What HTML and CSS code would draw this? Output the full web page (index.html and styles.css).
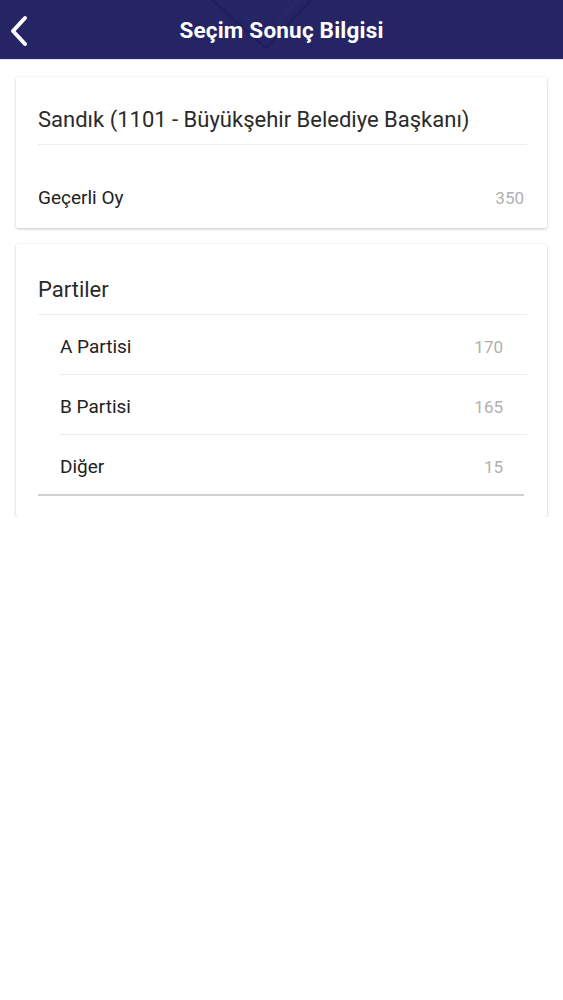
FILE: index.html
```html
<!DOCTYPE html>
<html lang="tr">
<head>
<meta charset="utf-8">
<title>Seçim Sonuç Bilgisi</title>
<link rel="stylesheet" href="styles.css">
</head>
<body>
<header class="topbar">
  <svg class="deco" width="563" height="59" viewBox="0 0 563 59" aria-hidden="true">
    <polyline points="212,0 266,48 311,0" fill="none" stroke="#1c1c55" stroke-width="2"/>
    <polyline points="228,0 266,36 297,0" fill="none" stroke="#2b2b70" stroke-width="1.5"/>
  </svg>
  <button class="back" aria-label="Geri">
    <svg width="22" height="32" viewBox="0 0 22 32">
      <polyline points="16,3 4,16 16,29" fill="none" stroke="#fff" stroke-width="4" stroke-linecap="round" stroke-linejoin="round"/>
    </svg>
  </button>
  <h1 class="title">Seçim Sonuç Bilgisi</h1>
</header>

<main class="content">
  <section class="card card-first">
    <h2 class="card-title">Sandık (1101 - Büyükşehir Belediye Başkanı)</h2>
    <div class="row row-total">
      <span class="label">Geçerli Oy</span>
      <span class="value">350</span>
    </div>
  </section>

  <section class="card card-second">
    <h2 class="card-title">Partiler</h2>
    <ul class="list">
      <li class="item"><span class="label">A Partisi</span><span class="value">170</span></li>
      <li class="item"><span class="label">B Partisi</span><span class="value">165</span></li>
      <li class="item"><span class="label">Diğer</span><span class="value">15</span></li>
    </ul>
  </section>
</main>
</body>
</html>
```

FILE: styles.css
```css
* { box-sizing: border-box; }

html, body {
  margin: 0;
  padding: 0;
  background: #ffffff;
  font-family: Roboto, "Noto Sans", "Liberation Sans", sans-serif;
  color: #2a2a2a;
}

.topbar {
  position: relative;
  height: 60px;
  background: #252566;
  display: flex;
  align-items: center;
  justify-content: center;
  border-bottom: 1px solid #e4e6f2;
  overflow: hidden;
}

.deco {
  position: absolute;
  left: 0;
  top: 0;
  opacity: 0.7;
}

.back {
  position: absolute;
  left: 8px;
  top: 14px;
  width: 24px;
  height: 34px;
  padding: 0;
  border: 0;
  background: transparent;
  display: flex;
  align-items: center;
  justify-content: center;
}

.title {
  position: relative;
  margin: 0;
  font-size: 22.5px;
  font-weight: 700;
  color: #ffffff;
  letter-spacing: 0.2px;
}

.content {
  padding: 17px 16px 0;
  display: flex;
  flex-direction: column;
  gap: 16px;
}

.card {
  background: #fff;
  border-radius: 2px;
  box-shadow: 0 1px 3px rgba(0, 0, 0, 0.22), 0 0 1px rgba(0, 0, 0, 0.08);
  padding: 0 20px 0 22px;
}

.card-title {
  margin: 0;
  font-size: 22px;
  line-height: 28px;
  font-weight: 400;
  color: #2a2a2a;
  padding-top: 29px;
  padding-bottom: 10px;
  border-bottom: 1px solid #ececec;
}

.card-second .card-title {
  padding-top: 32px;
}

.row, .item {
  display: flex;
  justify-content: space-between;
  align-items: baseline;
  font-size: 19px;
  line-height: 22px;
}

.row-total {
  padding: 42px 3px 19px 0;
}

.label { color: #222; }

.value {
  color: #b0b0b0;
  font-size: 17px;
}

.list {
  list-style: none;
  margin: 0;
  padding: 0 0 21px;
}

.item {
  margin-left: 22px;
  padding: 21px 24px 16px 0;
  border-bottom: 1px solid #ececec;
}

.item:last-child {
  margin-left: 0;
  padding-left: 22px;
  margin-right: 3px;
  padding-right: 21px;
  border-bottom: 2px solid #cfcfcf;
}
```
